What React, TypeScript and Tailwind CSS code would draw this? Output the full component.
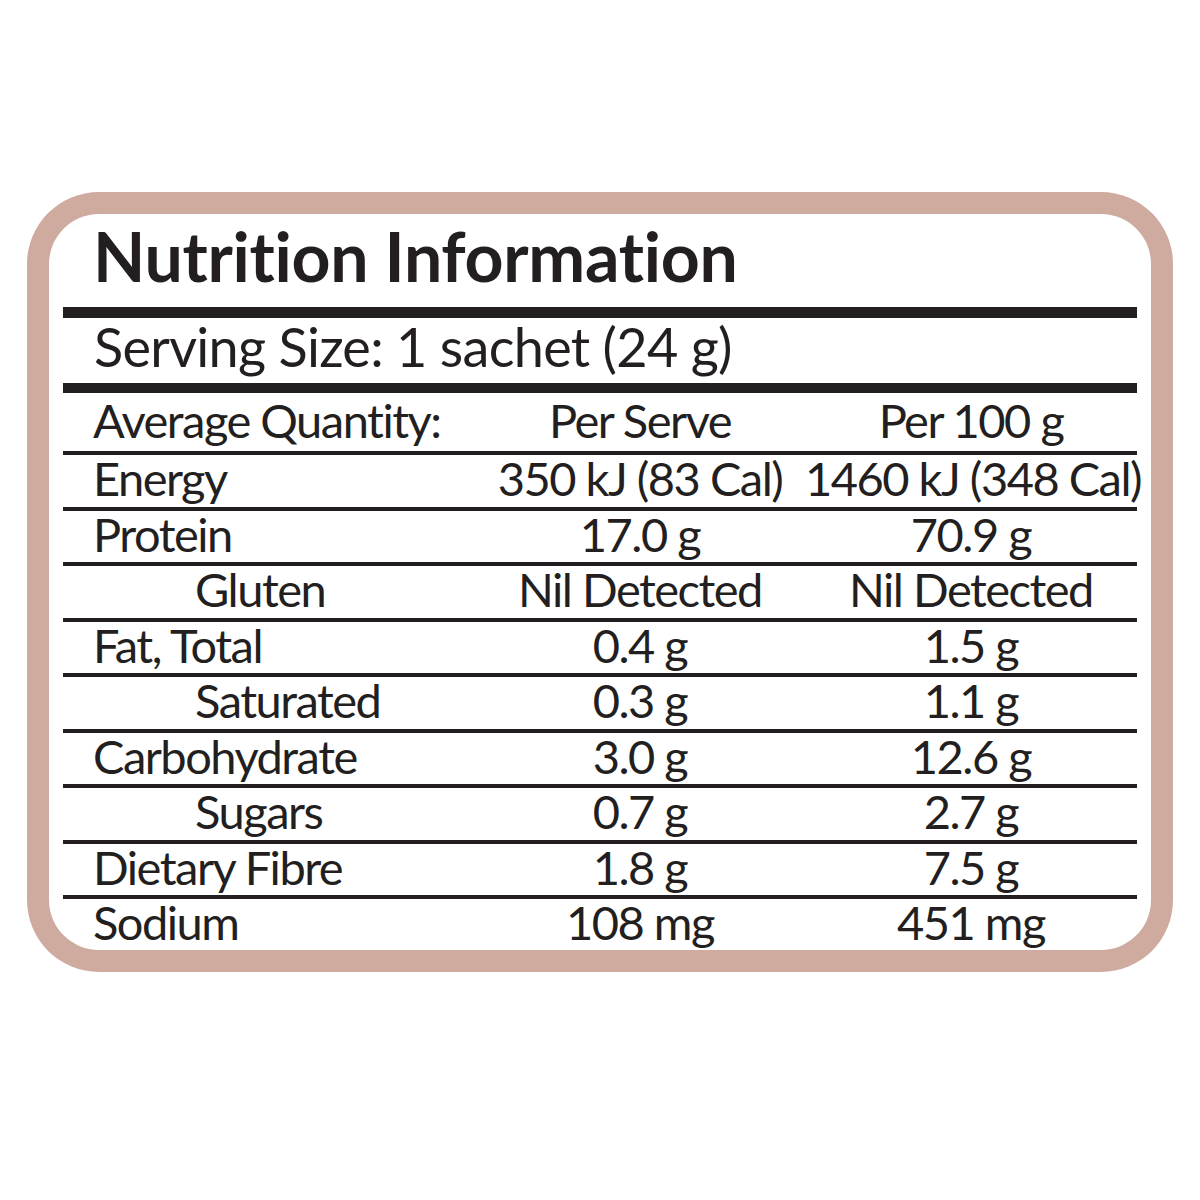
import React from 'react';

type Row = { label: string; serve: string; per100: string; indent?: boolean };

const ROWS: Row[] = [
  { label: 'Energy', serve: '350 kJ (83 Cal)', per100: '1460 kJ (348 Cal)' },
  { label: 'Protein', serve: '17.0 g', per100: '70.9 g' },
  { label: 'Gluten', serve: 'Nil Detected', per100: 'Nil Detected', indent: true },
  { label: 'Fat, Total', serve: '0.4 g', per100: '1.5 g' },
  { label: 'Saturated', serve: '0.3 g', per100: '1.1 g', indent: true },
  { label: 'Carbohydrate', serve: '3.0 g', per100: '12.6 g' },
  { label: 'Sugars', serve: '0.7 g', per100: '2.7 g', indent: true },
  { label: 'Dietary Fibre', serve: '1.8 g', per100: '7.5 g' },
  { label: 'Sodium', serve: '108 mg', per100: '451 mg' },
];

function TableRow({ row, last }: { row: Row; last: boolean }) {
  return (
    <div
      className={
        'grid grid-cols-[412px_330px_332px] h-[51.5px] box-content leading-[47px] text-[47px] tracking-[-1.5px] ' +
        (last ? '' : 'border-b-4 border-[#231f20]')
      }
    >
      <div className={'whitespace-nowrap ' + (row.indent ? 'pl-[132px]' : 'pl-[30px]')}>{row.label}</div>
      <div className="text-center whitespace-nowrap">{row.serve}</div>
      <div className="text-center whitespace-nowrap">{row.per100}</div>
    </div>
  );
}

export default function App() {
  return (
    <div className="w-[1200px] h-[1200px] bg-white pt-[192px] pl-[27px] font-['Lato',sans-serif] text-[#231f20]">
      <div className="w-[1146px] h-[780px] rounded-[72px] bg-[#cfaa9f] p-[22px]">
        <div className="h-full rounded-[50px] bg-white px-[14px]">
          <div className="h-[93px] leading-[83px] text-[68px] font-bold tracking-[-0.3px] pl-[30px] whitespace-nowrap">
            Nutrition Information
          </div>
          <div className="h-[11px] bg-[#231f20]" />
          <div className="h-[65px] leading-[58px] text-[54px] tracking-[-0.7px] pl-[31px] whitespace-nowrap">
            Serving Size: 1 sachet (24 g)
          </div>
          <div className="h-[10px] bg-[#231f20]" />
          <div className="grid grid-cols-[412px_330px_332px] h-[58px] leading-[54px] text-[47px] tracking-[-1.5px] border-b-4 border-[#231f20] box-content">
            <div className="pl-[30px] whitespace-nowrap">Average Quantity:</div>
            <div className="text-center whitespace-nowrap">Per Serve</div>
            <div className="text-center whitespace-nowrap">Per 100 g</div>
          </div>
          {ROWS.map((r, i) => (
            <TableRow key={r.label} row={r} last={i === ROWS.length - 1} />
          ))}
        </div>
      </div>
    </div>
  );
}
